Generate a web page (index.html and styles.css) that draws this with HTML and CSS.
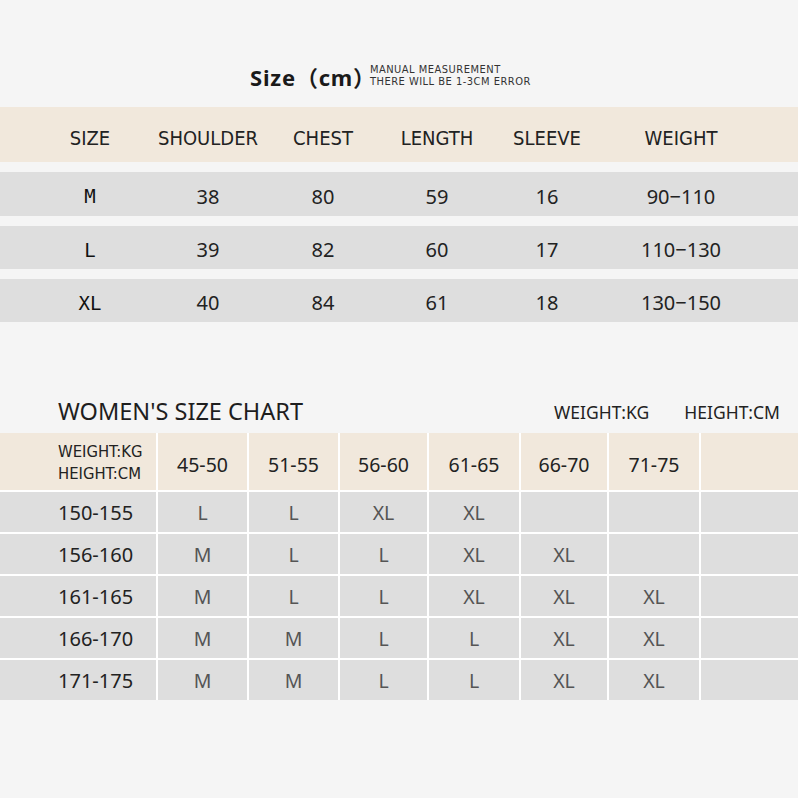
FILE: index.html
```html
<!DOCTYPE html>
<html lang="en">
<head>
<meta charset="utf-8">
<title>Size chart</title>
<link rel="stylesheet" href="styles.css">
</head>
<body>
<header class="head">
  <h1 class="title">Size（cm）</h1>
  <p class="note">MANUAL MEASUREMENT<br>THERE WILL BE 1-3CM ERROR</p>
</header>

<section class="men">
  <div class="mrow mhead">
    <span>SIZE</span><span>SHOULDER</span><span>CHEST</span><span>LENGTH</span><span>SLEEVE</span><span>WEIGHT</span>
  </div>
  <div class="mrow mdata">
    <span class="sz">M</span><span>38</span><span>80</span><span>59</span><span>16</span><span>90−110</span>
  </div>
  <div class="mrow mdata">
    <span class="sz">L</span><span>39</span><span>82</span><span>60</span><span>17</span><span>110−130</span>
  </div>
  <div class="mrow mdata">
    <span class="sz">XL</span><span>40</span><span>84</span><span>61</span><span>18</span><span>130−150</span>
  </div>
</section>

<div class="chart-head">
  <h2 class="chart-title">WOMEN'S SIZE CHART</h2>
  <span class="unit unit-w">WEIGHT:KG</span>
  <span class="unit unit-h">HEIGHT:CM</span>
</div>

<section class="women">
  <div class="c hd first">WEIGHT:KG<br>HEIGHT:CM</div>
  <div class="c hd">45-50</div><div class="c hd">51-55</div><div class="c hd">56-60</div><div class="c hd">61-65</div><div class="c hd">66-70</div><div class="c hd">71-75</div><div class="c hd"></div>

  <div class="c lbl">150-155</div>
  <div class="c v">L</div><div class="c v">L</div><div class="c v">XL</div><div class="c v">XL</div><div class="c v"></div><div class="c v"></div><div class="c v"></div>

  <div class="c lbl">156-160</div>
  <div class="c v">M</div><div class="c v">L</div><div class="c v">L</div><div class="c v">XL</div><div class="c v">XL</div><div class="c v"></div><div class="c v"></div>

  <div class="c lbl">161-165</div>
  <div class="c v">M</div><div class="c v">L</div><div class="c v">L</div><div class="c v">XL</div><div class="c v">XL</div><div class="c v">XL</div><div class="c v"></div>

  <div class="c lbl">166-170</div>
  <div class="c v">M</div><div class="c v">M</div><div class="c v">L</div><div class="c v">L</div><div class="c v">XL</div><div class="c v">XL</div><div class="c v"></div>

  <div class="c lbl">171-175</div>
  <div class="c v">M</div><div class="c v">M</div><div class="c v">L</div><div class="c v">L</div><div class="c v">XL</div><div class="c v">XL</div><div class="c v"></div>
</section>
</body>
</html>
```

FILE: styles.css
```css
html, body {
  margin: 0;
  padding: 0;
  background: #f5f5f5;
}
body {
  width: 798px;
  height: 798px;
  overflow: hidden;
  font-family: "Noto Sans", "Open Sans", sans-serif;
  color: #222;
}

/* title */
.head {
  height: 107px;
  box-sizing: border-box;
  display: flex;
  align-items: flex-end;
  padding-left: 250px;
  padding-bottom: 17px;
}
.title {
  margin: 0;
  font-family: "Noto Sans", "Noto Sans CJK SC", sans-serif;
  font-weight: 700;
  font-size: 22px;
  line-height: 26px;
  color: #1a1a1a;
  letter-spacing: 0.8px;
}
.note {
  margin: 0 0 2px -6px;
  font-family: "DejaVu Sans Condensed", "DejaVu Sans", sans-serif;
  font-size: 11px;
  line-height: 12px;
  letter-spacing: 0.5px;
  color: #333;
}

/* men table */
.men {
  display: flex;
  flex-direction: column;
  gap: 10px;
}
.mrow {
  display: grid;
  grid-template-columns: 120px 116px 114px 114px 106px 162px;
  padding-left: 30px;
  align-items: center;
  justify-items: center;
}
.mhead {
  height: 55px;
  background: #f1e8dc;
  font-family: "DejaVu Sans Condensed", "DejaVu Sans", sans-serif;
  font-size: 20px;
  color: #222;
  padding-top: 7px;
  box-sizing: border-box;
}
.mdata {
  height: 43px;
  background: #dedede;
  font-size: 20px;
  color: #222;
  padding-top: 4px;
  box-sizing: border-box;
}
.mdata:nth-child(2) { height: 44px; }
.sz {
  font-family: "DejaVu Sans Mono", monospace;
  font-size: 19px;
  color: #111;
}

/* women heading */
.chart-head {
  height: 111px;
  box-sizing: border-box;
  display: flex;
  align-items: flex-end;
  padding-bottom: 8px;
  padding-left: 58px;
}
.chart-title {
  margin: 0;
  font-weight: 400;
  font-size: 23.5px;
  line-height: 28px;
  color: #1e1e1e;
}
.unit {
  font-size: 17.5px;
  line-height: 26px;
  color: #222;
}
.unit-w { margin-left: auto; }
.unit-h { margin-left: 35px; margin-right: 18px; }

/* women table */
.women {
  display: grid;
  grid-template-columns: 156px 89px 89px 87px 90px 86px 90px 1fr;
  grid-template-rows: 57px repeat(5, 40px);
  gap: 2px;
  background: #fff;
}
.c {
  display: flex;
  align-items: center;
  justify-content: center;
  font-size: 19.5px;
}
.hd {
  background: #f1e8dc;
  color: #222;
  padding-top: 5px;
  box-sizing: border-box;
}
.hd.first {
  justify-content: flex-start;
  padding-left: 58px;
  font-family: "DejaVu Sans Condensed", "DejaVu Sans", sans-serif;
  font-size: 16.5px;
  line-height: 22px;
  padding-top: 3px;
}
.lbl {
  background: #dedede;
  justify-content: flex-start;
  padding-left: 58px;
  font-size: 20px;
  color: #222;
}
.v {
  background: #dedede;
  color: #555;
}
```
